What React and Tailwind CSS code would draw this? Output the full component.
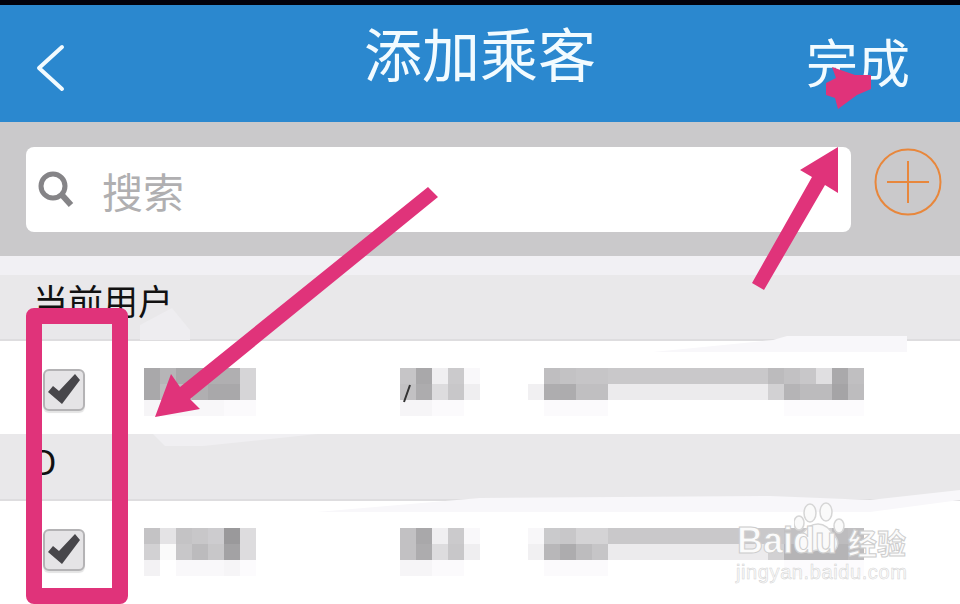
import React from "react";

const cjk = "font-['Noto_Sans_CJK_SC','Noto_Sans',sans-serif]";

// pixelated (blurred out) passenger details, one array per mosaic row
const names = [
  [
    ["#a9a8aa", "#b6b5b7", "#a9a8aa", "#a9a8aa", "#b0afb1", "#b0afb1", "#d6d5d7"],
    ["#a9a8aa", "#bdbcbe", "#bdbcbe", "#b0afb1", "#a9a8aa", "#a9a8aa", "#d6d5d7"],
    ["#f6f5f7", "#f8f7f9", "#f8f7f9", "#f8f7f9", "#f8f7f9", "#fbfafc", "#fbfafc"],
  ],
  [
    ["#c4c3c5", "#e4e3e5", "#c4c3c5", "#c8c7c9", "#cdcccf", "#9a999b", "#dddcde"],
    ["#d2d1d3", "#fafafa", "#c8c7c9", "#bcbbbd", "#c8c7c9", "#a3a2a4", "#dddcde"],
    ["#f3f2f4", "#ffffff", "#f9f8fa", "#f9f8fa", "#f9f8fa", "#f6f5f7", "#fcfbfd"],
  ],
];

const genders = [
  [
    ["#c6c5c7", "#a9a8aa", "#f0eff1", "#cbcacc", "#f9f8fa"],
    ["#c2c1c3", "#adacae", "#dddcde", "#c8c7c9", "#efeef0"],
    ["#f6f5f7", "#f6f5f7", "#fbfafc", "#fbfafc", "#ffffff"],
  ],
  [
    ["#c2c1c3", "#a9a8aa", "#f0eff1", "#cbcacc", "#f9f8fa"],
    ["#c2c1c3", "#adacae", "#dddcde", "#c8c7c9", "#efeef0"],
    ["#f6f5f7", "#f6f5f7", "#fbfafc", "#fbfafc", "#ffffff"],
  ],
];

const mid = (color) => Array(10).fill(color);

const ids = [
  [
    ["#ffffff", "#bfbec0", "#c3c2c4", "#c6c5c7", "#c6c5c7", ...mid("#c9c8ca"), "#bcbbbd", "#c2c1c3", "#c8c7c9", "#e0dfe1", "#aaa9ab", "#c0bfc1"],
    ["#f1f0f2", "#aeadaf", "#adacae", "#c0bfc1", "#c0bfc1", ...mid("#ecebed"), "#d2d1d3", "#b5b4b6", "#bcbbbd", "#bcbbbd", "#a5a4a6", "#bdbcbe"],
    ["#ffffff", "#fbfafc", "#fbfafc", "#fbfafc", "#fbfafc", ...mid("#ffffff"), "#ffffff", "#fcfbfd", "#fcfbfd", "#fcfbfd", "#fcfbfd", "#fcfbfd"],
  ],
  [
    ["#f8f7f9", "#cacacc", "#c8c7c9", "#d4d3d5", "#d4d3d5", ...mid("#c9c8ca"), "#c9c8ca", "#c2c1c3", "#c8c7c9", "#d0cfd1", "#bdbcbe", "#c0bfc1"],
    ["#f1f0f2", "#b8b7b9", "#adacae", "#bdbcbe", "#c6c5c7", ...mid("#ecebed"), "#d2d1d3", "#b5b4b6", "#b5b4b6", "#b5b4b6", "#b5b4b6", "#bdbcbe"],
    ["#ffffff", "#fbfafc", "#fbfafc", "#fbfafc", "#fbfafc", ...mid("#ffffff"), "#ffffff", "#fcfbfd", "#fcfbfd", "#fcfbfd", "#fcfbfd", "#fcfbfd"],
  ],
];

const Mosaic = ({ cells, className }) => (
  <div className={`shrink-0 ${className}`}>
    {cells.map((row, y) => (
      <div key={y} className="flex">
        {row.map((color, x) => (
          <div key={x} className="w-4 h-4" style={{ backgroundColor: color }} />
        ))}
      </div>
    ))}
  </div>
);

const Checkbox = () => (
  <div className="w-[42px] h-[42px] shrink-0 mt-px rounded-md border-2 border-[#b4b3b5] bg-[#e5e4e6] shadow-[0_2px_1px_#e4e4e4] relative">
    <svg className="absolute -left-0.5 -top-0.5" width="42" height="42" viewBox="0 0 42 42">
      <polygon points="5,23 10,17 16,22 32,5 37,11 19,35" fill="#47464a" />
    </svg>
  </div>
);

const PassengerRow = ({ index, className }) => (
  <div className={`flex items-start pl-[43px] pt-[27px] bg-white ${className}`}>
    <Checkbox />
    <Mosaic cells={names[index]} className="ml-[59px]" />
    <Mosaic cells={genders[index]} className="ml-[144px]" />
    <Mosaic cells={ids[index]} className="ml-[48px]" />
  </div>
);

const Annotations = () => (
  <svg className="absolute inset-0" width="960" height="604" viewBox="0 0 960 604">
    {/* retouched smears over the blurred rows */}
    <g fill="#f8f7fa">
      <polygon points="653,352 773,340 787,336 907,336 907,352" />
      <polygon points="317,512 480,498 770,496 870,500 960,490 960,500 870,512" />
    </g>
    <polygon points="153,434 317,434 203,446 165,446" fill="#f0eff2" />
    <polygon points="140,325 172,308 190,330 190,340 140,340" fill="#eeedf0" />
    <line x1="410" y1="385" x2="404" y2="402" stroke="#333" strokeWidth="2" />
    {/* pink arrows drawn on top of the screenshot */}
    <g fill="#e0337a">
      <polygon points="428,187 438,197 190,399 200,409 155,417 171,374 180,387" />
      <polygon points="838,147 800,170 812,177 752,283 764,290 825,185 838,193" />
      <polygon points="832,67 855,75 871,75 871,89 857,95 838,109 835,98 826,95 826,83 836,78" />
    </g>
  </svg>
);

const Watermark = () => (
  <div className="absolute left-[736px] top-[500px] w-[176px] h-[86px] text-[#fbfbfb]">
    <svg className="absolute left-[58px] top-[2px]" width="56" height="56" viewBox="0 0 56 56" fill="#fafafa" stroke="#d6d6d6" strokeWidth="1.5">
      <ellipse cx="16" cy="11" rx="6" ry="9" />
      <ellipse cx="32" cy="10" rx="6" ry="9" />
      <ellipse cx="5" cy="21" rx="5" ry="7" />
      <ellipse cx="45" cy="24" rx="5" ry="7" />
      <path d="M24 22c8 0 12 6 17 12 5 6 3 17-7 16-4 0-6-2-10-2s-6 2-10 2c-10 0-13-9-8-16 6-6 9-12 18-12z" />
    </svg>
    <span className="absolute left-px top-[25px] text-[36px] leading-[32px] font-bold font-['Liberation_Sans',sans-serif] [-webkit-text-stroke:1px_#cdcdcd]">
      Baidu
    </span>
    <span className={`absolute left-[112px] top-[27px] text-[29px] leading-[30px] font-bold [-webkit-text-stroke:1px_#cdcdcd] ${cjk}`}>
      经验
    </span>
    <span className="absolute left-0 top-[60px] text-[20px] leading-[24px] tracking-[0.6px] font-['Liberation_Sans',sans-serif] [-webkit-text-stroke:0.5px_#d2d2d2]">
      jingyan.baidu.com
    </span>
  </div>
);

export default function App() {
  return (
    <div className={`relative w-[960px] h-[604px] overflow-hidden bg-white ${cjk}`}>
      <div className="h-[5px] bg-[#02020c]" />

      <header className="h-[117px] bg-[#2b88cf] flex items-center justify-between pl-[36px] pr-[50px] text-white relative">
        <svg width="30" height="48" viewBox="0 0 30 48" fill="none" stroke="#f2fbff" strokeWidth="4" strokeLinecap="round" strokeLinejoin="round" className="mt-[9px]">
          <polyline points="26,3 3,24 26,45" />
        </svg>
        <h1 className="absolute left-[364px] top-[5px] text-[58px] leading-[84px] font-normal text-[#f2fbff]">
          添加乘客
        </h1>
        <span className="text-[52px] leading-[76px] mt-[-5px] text-[#f2fbff]">完成</span>
      </header>

      <div className="h-[134px] bg-[#cac9cb] flex items-start pt-[25px] pl-[26px]">
        <div className="w-[825px] h-[85px] bg-white rounded-lg flex items-center pl-[12px]">
          <svg width="36" height="38" viewBox="0 0 36 38" fill="none" stroke="#858487" className="shrink-0">
            <circle cx="15" cy="15" r="12" strokeWidth="5" />
            <line x1="24" y1="24" x2="33" y2="34" strokeWidth="6" />
          </svg>
          <span className="ml-[28px] text-[41px] leading-[50px] text-[#b0afb1]">搜索</span>
        </div>
        <svg width="68" height="68" viewBox="0 0 68 68" fill="none" stroke="#e8873c" strokeWidth="2" className="ml-[23px] mt-[1px] shrink-0">
          <circle cx="34" cy="34" r="32.5" />
          <line x1="13" y1="34" x2="55" y2="34" />
          <line x1="34" y1="13" x2="34" y2="55" />
        </svg>
      </div>

      <div className="h-[19px] bg-[#f1f0f4]" />
      <div className="h-[66px] bg-[#e9e8ea] border-b-2 border-[#dedddf] pl-[33px] text-[35px] leading-[50px] text-[#111]">
        当前用户
      </div>

      <PassengerRow index={0} className="h-[93px]" />

      <div className="h-[67px] bg-[#e9e8ea] border-b-2 border-[#dedddf] pl-[33px] text-[34px] leading-[54px] text-[#111]">
        D
      </div>

      <PassengerRow index={1} className="h-[95px] border-b-2 border-[#dcdbdd] box-content" />

      <Annotations />
      <Watermark />

      {/* pink box around the checkboxes */}
      <div className="absolute left-[26px] top-[308px] w-[102px] h-[296px] border-[16px] border-[#e0337a] rounded-lg" />
    </div>
  );
}
